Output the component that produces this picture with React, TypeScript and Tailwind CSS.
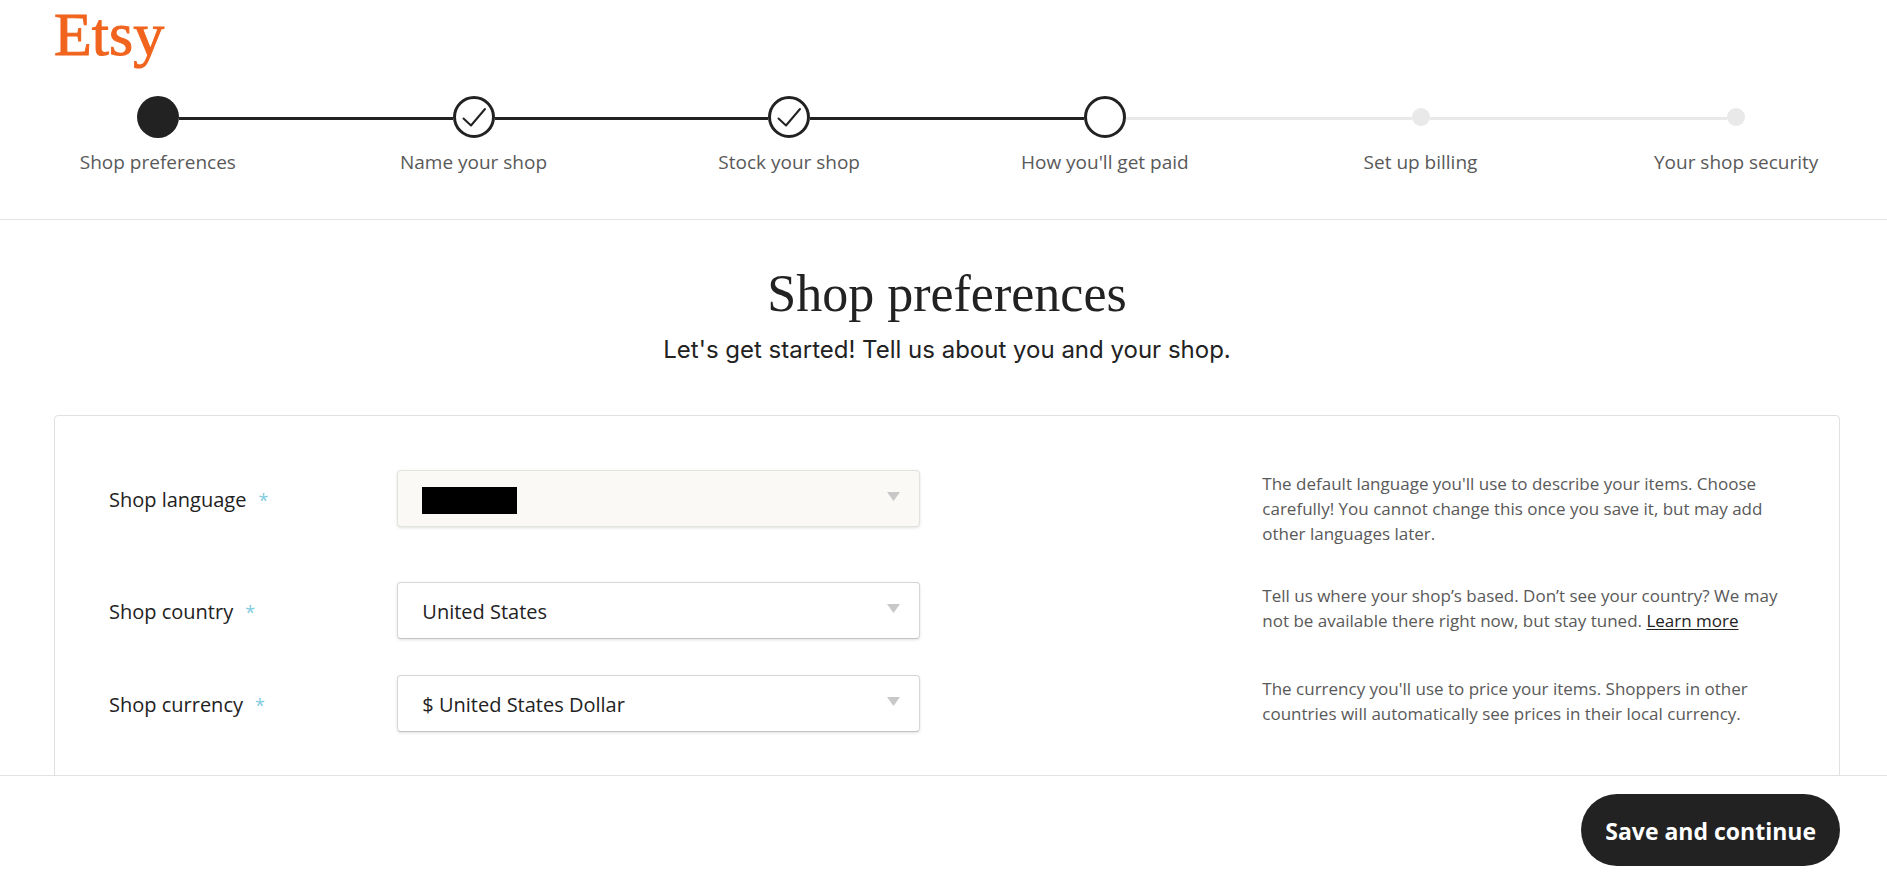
import { useState } from 'react';
import type { ReactNode } from 'react';

type StepState = 'current' | 'done' | 'open' | 'upcoming';

interface Step {
  label: string;
  state: StepState;
}

const steps: Step[] = [
  { label: 'Shop preferences', state: 'current' },
  { label: 'Name your shop', state: 'done' },
  { label: 'Stock your shop', state: 'done' },
  { label: "How you'll get paid", state: 'open' },
  { label: 'Set up billing', state: 'upcoming' },
  { label: 'Your shop security', state: 'upcoming' },
];

function StepMarker({ state }: { state: StepState }) {
  if (state === 'upcoming') {
    return <span className="size-[18px] rounded-full bg-[#e9e9e9]" />;
  }
  if (state === 'current') {
    return <span className="size-[42px] rounded-full bg-[#222222]" />;
  }
  return (
    <span className="size-[42px] rounded-full border-3 border-[#222222] bg-white">
      {state === 'done' && (
        <svg viewBox="3 3 36 36" fill="none" stroke="#222222" strokeWidth="2" strokeLinecap="round" strokeLinejoin="round">
          <path d="M10.5 22.5 18 29.5 32 13" />
        </svg>
      )}
    </span>
  );
}

function Connector({ visible, active }: { visible: boolean; active: boolean }) {
  if (!visible) return <span className="flex-1" />;
  return <span className={active ? 'mt-[3px] h-[3px] flex-1 bg-[#222222]' : 'mt-[3px] h-[3px] flex-1 bg-[#e9e9e9]'} />;
}

function Stepper() {
  return (
    <ol className="grid grid-cols-6">
      {steps.map((step, idx) => (
        <li key={step.label}>
          <a href="#" className="flex flex-col items-center gap-3">
            <span className="flex h-[42px] w-full items-center">
              <Connector visible={idx > 0} active={step.state !== 'upcoming'} />
              <StepMarker state={step.state} />
              <Connector visible={idx < steps.length - 1} active={idx < 3} />
            </span>
            <span className="text-[19px] leading-6 text-[#595959]">{step.label}</span>
          </a>
        </li>
      ))}
    </ol>
  );
}

interface FieldProps {
  id: string;
  label: string;
  help: ReactNode;
  options: string[];
  locked?: boolean;
}

function SelectField({ id, label, help, options, locked = false }: FieldProps) {
  const [value, setValue] = useState(options[0]);

  return (
    <div className="grid grid-cols-12 items-start gap-x-[54px]">
      <label htmlFor={id} className="col-span-2 flex gap-3 pt-4 text-[20px] leading-7 whitespace-nowrap text-[#222222]">
        {label}
        <span className="text-[18px] text-[#7fcce0]">*</span>
      </label>
      <div className="relative col-span-4">
        <select
          id={id}
          value={value}
          disabled={locked}
          onChange={(e) => setValue(e.target.value)}
          className="h-[57px] w-full appearance-none rounded border border-[#d6d6d6] border-b-[#c4c4c4] bg-white px-6 pt-0.5 text-[20px] text-[#222222] shadow-[0_1px_3px_rgba(0,0,0,0.12)] disabled:border-[#e1e3df] disabled:bg-[#faf9f5] disabled:opacity-100"
        >
          {options.map((option) => (
            <option key={option}>{option}</option>
          ))}
        </select>
        {locked && <span className="absolute top-[17px] left-[25px] h-[27px] w-[95px] bg-black" />}
        <svg className="pointer-events-none absolute top-[22px] right-5 h-[9px] w-[13px]" viewBox="0 0 13 9" fill="#c8c8c8">
          <path d="M0 0H13L6.5 9Z" />
        </svg>
      </div>
      <p className="col-span-4 col-start-9 pt-px text-[17px] leading-[25px] text-[#595959]">{help}</p>
    </div>
  );
}

export default function App() {
  return (
    <div className="h-screen overflow-hidden bg-white font-['Open_Sans','Noto_Sans',sans-serif]">
      {/* The page runs slightly under the window's right edge */}
      <div className="-mr-[7px] flex h-full flex-col">
        <header className="border-b border-[#e1e3df] pb-[45px]">
          <a
            href="#"
            className="ml-[54px] block h-24 w-fit pt-0.5 font-['Liberation_Serif',serif] text-[62px] leading-[64px] text-[#f1641e] [-webkit-text-stroke:1px_#f1641e]"
          >
            Etsy
          </a>
          <Stepper />
        </header>

        <main className="min-h-0 flex-1 overflow-y-auto px-[54px] [scrollbar-width:none]">
          <div className="pt-11 pb-[47px] text-center text-[#222222]">
            <h1 className="font-['Liberation_Serif',serif] text-[52px] leading-[60px]">Shop preferences</h1>
            <p className="mt-2 font-['Inter',sans-serif] text-[24px] leading-9">
              Let's get started! Tell us about you and your shop.
            </p>
          </div>

          <form className="flex flex-col gap-9 rounded border border-[#e1e1e1] p-[54px]">
            <SelectField
              id="shop-language"
              label="Shop language"
              options={['']}
              locked
              help="The default language you'll use to describe your items. Choose carefully! You cannot change this once you save it, but may add other languages later."
            />
            <SelectField
              id="shop-country"
              label="Shop country"
              options={['United States']}
              help={
                <>
                  Tell us where your shop’s based. Don’t see your country? We may not be available there right now, but stay tuned.{' '}
                  <a href="#" className="text-[#222222] underline underline-offset-2">Learn more</a>
                </>
              }
            />
            <SelectField
              id="shop-currency"
              label="Shop currency"
              options={['$ United States Dollar']}
              help="The currency you'll use to price your items. Shoppers in other countries will automatically see prices in their local currency."
            />
          </form>
        </main>

        <footer className="flex justify-end border-t border-[#e1e3df] bg-white px-[54px] py-[18px]">
          <button type="button" className="h-[72px] rounded-full bg-[#222222] px-6 pt-0.5 text-[23px] font-bold text-white">
            Save and continue
          </button>
        </footer>
      </div>
    </div>
  );
}
